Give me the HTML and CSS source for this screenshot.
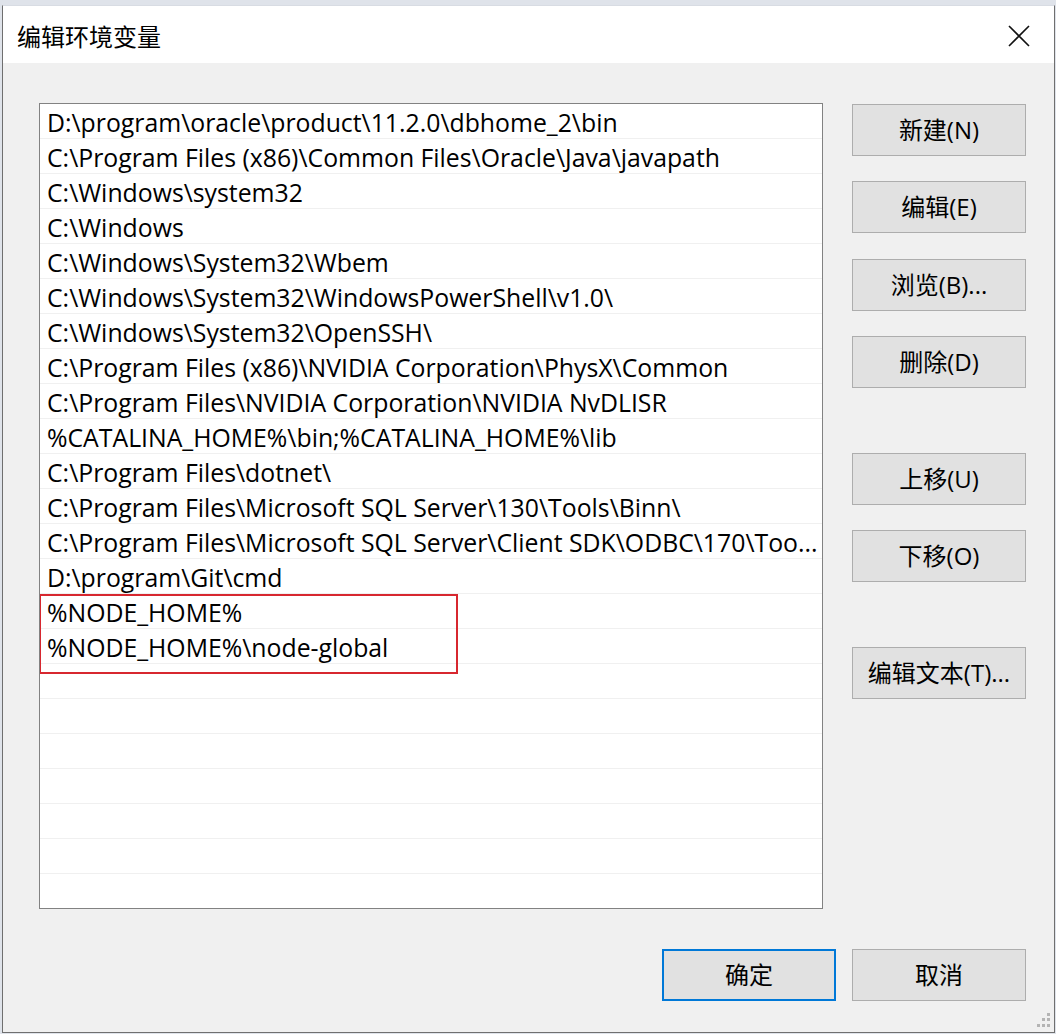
FILE: index.html
```html
<!DOCTYPE html>
<html lang="zh-CN">
<head>
    <meta charset="UTF-8">
    <title>编辑环境变量</title>
    <link rel="stylesheet" href="styles.css">
</head>
<body>
    <div class="window">
        <div class="titlebar">
            <div class="title">编辑环境变量</div>
            <svg class="close" width="22" height="22" viewBox="0 0 22 22">
                <path d="M1 1 L21 21 M21 1 L1 21" stroke="#111" stroke-width="1.6" fill="none"/>
            </svg>
        </div>

        <div class="body">
            <div class="content">
                <div class="list">
                    <div class="row">D:\program\oracle\product\11.2.0\dbhome_2\bin</div>
                    <div class="row">C:\Program Files (x86)\Common Files\Oracle\Java\javapath</div>
                    <div class="row">C:\Windows\system32</div>
                    <div class="row">C:\Windows</div>
                    <div class="row">C:\Windows\System32\Wbem</div>
                    <div class="row">C:\Windows\System32\WindowsPowerShell\v1.0\</div>
                    <div class="row">C:\Windows\System32\OpenSSH\</div>
                    <div class="row">C:\Program Files (x86)\NVIDIA Corporation\PhysX\Common</div>
                    <div class="row">C:\Program Files\NVIDIA Corporation\NVIDIA NvDLISR</div>
                    <div class="row">%CATALINA_HOME%\bin;%CATALINA_HOME%\lib</div>
                    <div class="row">C:\Program Files\dotnet\</div>
                    <div class="row">C:\Program Files\Microsoft SQL Server\130\Tools\Binn\</div>
                    <div class="row">C:\Program Files\Microsoft SQL Server\Client SDK\ODBC\170\Too...</div>
                    <div class="row">D:\program\Git\cmd</div>
                    <div class="row">%NODE_HOME%</div>
                    <div class="row">%NODE_HOME%\node-global</div>
                    <div class="row"></div>
                    <div class="row"></div>
                    <div class="row"></div>
                    <div class="row"></div>
                    <div class="row"></div>
                    <div class="row"></div>
                    <div class="row"></div>
                    <div class="highlight"></div>
                </div>

                <div class="side">
                    <button class="btn">新建(N)</button>
                    <button class="btn">编辑(E)</button>
                    <button class="btn">浏览(B)...</button>
                    <button class="btn">删除(D)</button>
                    <button class="btn group">上移(U)</button>
                    <button class="btn">下移(O)</button>
                    <button class="btn group">编辑文本(T)...</button>
                </div>
            </div>

            <div class="footer">
                <button class="btn default">确定</button>
                <button class="btn">取消</button>
            </div>

            <svg class="grip" width="18" height="18" viewBox="0 0 18 18">
                <rect x="14" y="2" width="3" height="3" fill="#b4b4b4"/>
                <rect x="9" y="7" width="3" height="3" fill="#b4b4b4"/>
                <rect x="14" y="7" width="3" height="3" fill="#b4b4b4"/>
                <rect x="4" y="13" width="3" height="3" fill="#b4b4b4"/>
                <rect x="9" y="13" width="3" height="3" fill="#b4b4b4"/>
                <rect x="14" y="13" width="3" height="3" fill="#b4b4b4"/>
            </svg>
        </div>
    </div>
</body>
</html>
```

FILE: styles.css
```css
* {
    box-sizing: border-box;
}

body {
    margin: 0;
    padding: 5px 0 0 2px;
    background-color: #dfe3ea;
    font-family: 'Open Sans', 'Noto Sans CJK SC', sans-serif;
    overflow: hidden;
}

.window {
    width: 1053px;
    height: 1028px;
    background-color: #f0f0f0;
    border: 1px solid #6f6f6f;
    border-top-color: #d8dce3;
    display: flex;
    flex-direction: column;
}

.titlebar {
    height: 57px;
    background-color: #ffffff;
    display: flex;
    align-items: center;
    justify-content: space-between;
    padding: 0 24px 0 14px;
}

.title {
    font-family: 'Noto Sans CJK SC', sans-serif;
    font-size: 24px;
    color: #000;
    margin-top: 2px;
}

.close {
    margin-top: 2px;
}

.body {
    flex: 1;
    position: relative;
}

.content {
    display: flex;
    gap: 29px;
    padding: 40px 0 0 36px;
}

.list {
    position: relative;
    width: 784px;
    height: 806px;
    background-color: #ffffff;
    border: 1px solid #828282;
    overflow: hidden;
}

.row {
    height: 35px;
    line-height: 36px;
    padding-left: 7px;
    border-bottom: 1px solid #f0f0f0;
    font-size: 24.8px;
    color: #000;
    white-space: nowrap;
    overflow: hidden;
}

.highlight {
    position: absolute;
    left: -1px;
    top: 490px;
    width: 419px;
    height: 80px;
    border: 2px solid #d7272f;
}

.side {
    display: flex;
    flex-direction: column;
    gap: 25px;
    padding-top: 1px;
}

.btn {
    width: 174px;
    height: 52px;
    background-color: #e1e1e1;
    border: 1px solid #adadad;
    font-family: 'Open Sans', 'Noto Sans CJK SC', sans-serif;
    font-size: 24px;
    color: #000;
    padding: 0 0 3px 0;
    margin: 0;
}

.side .btn:nth-child(3) {
    margin-top: 1px;
}

.side .btn.group {
    margin-top: 40px;
}

.footer {
    display: flex;
    justify-content: flex-end;
    gap: 16px;
    padding: 40px 28px 0 0;
}

.btn.default {
    border: 2px solid #0078d7;
}

.grip {
    position: absolute;
    right: 3px;
    bottom: 3px;
}
```
